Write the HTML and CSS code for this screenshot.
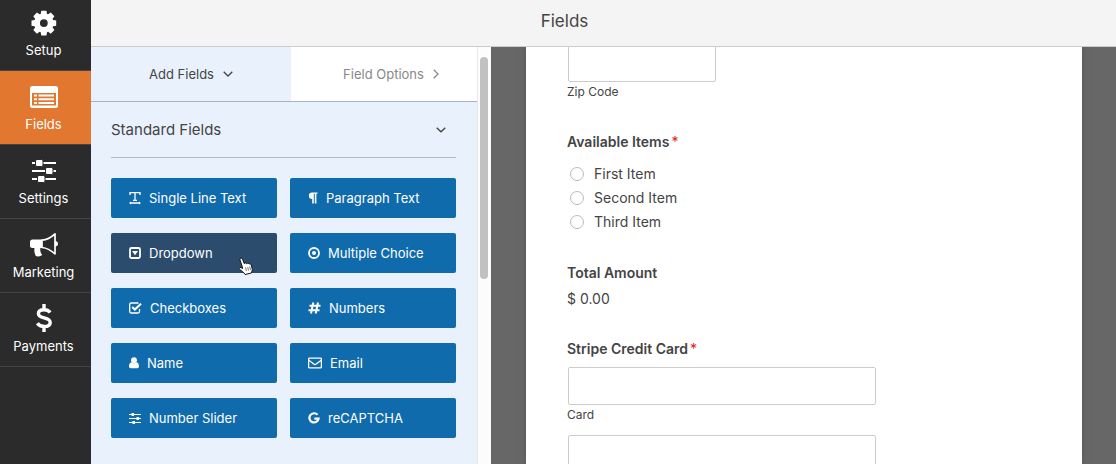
FILE: index.html
```html
<!DOCTYPE html>
<html lang="en">
<head>
<meta charset="utf-8">
<title>Fields</title>
<link rel="stylesheet" href="styles.css">
</head>
<body>
<div class="builder">
  <nav class="sidebar" aria-label="Builder sections">
    <button class="nav-item" type="button">
      <svg width="26" height="26" viewBox="0 0 26 26" fill="#fff"><path fill-rule="evenodd" d="M10.300 1h5.400l.6 3.300 1.200.5 2.800-1.900 3.800 3.800-1.900 2.800.5 1.200 3.300.6v5.400l-3.300.6-.5 1.200 1.900 2.800-3.800 3.800-2.800-1.900-1.200.5-.6 3.300h-5.400l-.6-3.300-1.200-.5-2.800 1.900-3.800-3.800 1.900-2.800-.5-1.200L0 16.700v-5.400l3.300-.6.5-1.200-1.900-2.800 3.800-3.800 2.800 1.900 1.200-.5zM13 9.900a4.100 4.100 0 1 0 0 8.200 4.100 4.100 0 0 0 0-8.200z" transform="translate(.5 -.2) scale(.95)"/></svg>
      <span>Setup</span>
    </button>
    <button class="nav-item nav-item-active" type="button">
      <svg width="30" height="26" viewBox="0 0 30 26"><rect x="1" y="2" width="28" height="22" rx="2.500" fill="#fff"/><path d="M3 9h24v12.500H3z" fill="#e27730"/><path d="M5 11.500h3M5 15.300h3M5 19.100h3M9.500 11.500H25M9.500 15.300H25M9.500 19.100H25" stroke="#fff" stroke-width="2"/></svg>
      <span>Fields</span>
    </button>
    <button class="nav-item" type="button">
      <svg width="26" height="26" viewBox="0 0 26 26"><path d="M1 5h24M1 13h24M1 21h24" stroke="#fff" stroke-width="2"/><g fill="#fff" stroke="#2b2b2b" stroke-width="1"><rect x="4.500" y="1.500" width="7.500" height="7" rx="1.500"/><rect x="14.500" y="9.500" width="7.500" height="7" rx="1.500"/><rect x="6.500" y="17.500" width="7.500" height="7" rx="1.500"/></g></svg>
      <span>Settings</span>
    </button>
    <button class="nav-item" type="button">
      <svg width="30" height="26" viewBox="0 0 30 26"><path d="M3.500 7.500H13V16h-1.500c-.8 1.500.2 2.800 0 4 .3 1.200 1 2.100 1.700 2.800-1.700 2.200-5.200 2-6.700.7-.8-2.500-1.600-4.700-1-7.500h-2A2.500 2.500 0 0 1 1 13.500V10a2.500 2.500 0 0 1 2.500-2.500z" fill="#fff"/><path d="M13 8.200C17.500 7.800 22 5.500 26 1.800v20c-4-3.500-8.500-5.900-13-6.300z" fill="none" stroke="#fff" stroke-width="1.700" stroke-linejoin="round"/><path d="M26 9c4 0 4 5.500 0 5.500z" fill="#fff"/></svg>
      <span>Marketing</span>
    </button>
    <button class="nav-item" type="button">
      <svg width="20" height="28" viewBox="0 0 20 28"><path d="M16.200 8.500C14.800 6.700 12.600 5.700 10 5.700c-3.300 0-5.600 1.500-5.600 4 0 5.400 11.800 2.900 11.800 8.700 0 2.600-2.500 4.100-6 4.100-3 0-5.500-1.200-6.900-3.200M10 0v5.500M10 22.500V28" fill="none" stroke="#fff" stroke-width="3.400"/></svg>
      <span>Payments</span>
    </button>
  </nav>

  <div class="workspace">
    <header class="topbar"><h1>Fields</h1></header>
    <div class="columns">
      <aside class="panel">
        <div class="tabs">
          <button class="tab tab-active" type="button">Add Fields <svg width="10" height="6" viewBox="0 0 10 6"><path d="M.7.700L5 5 9.300.700" class="line"/></svg></button>
          <button class="tab" type="button">Field Options <svg width="6" height="10" viewBox="0 0 6 10"><path d="M.7.700L5 5 .7 9.300" class="line"/></svg></button>
        </div>
        <section class="group">
          <button class="group-title" type="button">Standard Fields <svg width="10" height="6" viewBox="0 0 10 6"><path d="M.700.700L5 4.800 9.300.700" class="line"/></svg></button>
          <div class="field-grid">
            <button class="field" type="button"><svg width="12" height="14" viewBox="0 0 12 14"><path d="M1 4V1.700h10V4M6 1.700v7.600M4 9.300h4M1 12h10" class="line"/><path d="M0 12l2-1.500v3zM12 12l-2-1.500v3z" fill="#fff"/></svg>Single Line Text</button>
            <button class="field" type="button"><svg width="10" height="14" viewBox="0 0 10 14"><path d="M9.500 1.500H4.200a3.300 3.300 0 0 0 0 6.600V12.500h1.600V2.700h1v9.800h1.600V2.700h1.100z" fill="#fff"/></svg>Paragraph Text</button>
            <button class="field field-hover" type="button"><svg width="12" height="14" viewBox="0 0 12 14"><rect x="1" y="2" width="10" height="10" rx="1.500" fill="none" stroke="#fff" stroke-width="1.800"/><path d="M3 5h6L6 9.200z" fill="#fff"/></svg>Dropdown
              <svg class="pointer" width="16" height="18" viewBox="0 0 16 18"><path d="M4.200 9.500L2.100 3.200C1.500 1.200 3.700.3 4.500 2.200l1.800 4.400c.5-1 1.900-.9 2.400.1.600-.8 1.900-.6 2.300.4.800-.6 2-.2 2.200.9l1 3.700c.3 1.500-.4 2.700-.8 4.300l-6.300 1.500c-1.300-2.300-3.500-3.700-5.500-5.100C.4 11.300 1.500 9.800 3 10.600l1.600 1z" fill="#fff" stroke="#111" stroke-width="1"/><path d="M7.600 10.500l.8 3.500M9.700 10l.8 3.500M11.700 9.500l.8 3.500" stroke="#555" stroke-width=".8"/></svg>
            </button>
            <button class="field" type="button"><svg width="12" height="14" viewBox="0 0 12 14"><circle cx="6" cy="7" r="5" fill="none" stroke="#fff" stroke-width="1.800"/><circle cx="6" cy="7" r="2" fill="#fff"/></svg>Multiple Choice</button>
            <button class="field" type="button"><svg width="13" height="14" viewBox="0 0 13 14"><path d="M10.500 8v2.500a1.500 1.500 0 0 1-1.500 1.500H2.200A1.500 1.500 0 0 1 .7 10.500v-7A1.500 1.500 0 0 1 2.200 2H9.500" class="line"/><path d="M3.300 6l2.500 2.500L12 2.700" fill="none" stroke="#fff" stroke-width="2"/></svg>Checkboxes</button>
            <button class="field" type="button"><svg width="13" height="14" viewBox="0 0 13 14"><path d="M5.300 1.500L3 12.500M10 1.500L7.700 12.500M1.500 4.800H12.500M.5 9.200H11.500" fill="none" stroke="#fff" stroke-width="2"/></svg>Numbers</button>
            <button class="field" type="button"><svg width="10" height="14" viewBox="0 0 10 14" fill="#fff"><circle cx="5" cy="4.200" r="2.900"/><path d="M2.400 6.200C3.800 7.600 6.200 7.600 7.600 6.200 9.300 6.700 10 8.300 10 10.300 10 11.600 9.200 12.300 8.200 12.300H1.800C.8 12.300 0 11.600 0 10.300 0 8.300.7 6.700 2.400 6.200z"/></svg>Name</button>
            <button class="field" type="button"><svg width="14" height="14" viewBox="0 0 14 14"><rect x=".6" y="2.100" width="12.800" height="9.800" rx="1" class="line"/><path d="M.8 4.200L5.800 8.100C6.600 8.700 7.400 8.700 8.200 8.100L13.200 4.200" class="line"/></svg>Email</button>
            <button class="field" type="button"><svg width="12" height="14" viewBox="0 0 12 14"><path d="M0 3.500h12M0 7.500h12M0 11.500h12" stroke="#fff" stroke-width="1"/><path d="M2.500 2h2.500v3h-2.500zM7.500 6h2.500v3h-2.500zM3.500 10h2.500v3h-2.500z" fill="#fff"/></svg>Number Slider</button>
            <button class="field" type="button"><svg width="12" height="14" viewBox="0 0 12 14"><path d="M9.500 3.800A4.600 4.600 0 1 0 10.600 7.600H6.300" fill="none" stroke="#fff" stroke-width="2.200"/></svg>reCAPTCHA</button>
          </div>
        </section>
        <div class="scrollbar"><div class="thumb"></div></div>
      </aside>

      <main class="preview">
        <form class="paper">
          <div class="form-field zip">
            <input class="box box-short" id="zip" type="text">
            <label class="sublabel" for="zip">Zip Code</label>
          </div>
          <fieldset class="form-field choices">
            <legend class="label">Available Items<span class="required">*</span></legend>
            <div class="options">
              <label class="option"><input type="radio" name="item">First Item</label>
              <label class="option"><input type="radio" name="item">Second Item</label>
              <label class="option"><input type="radio" name="item">Third Item</label>
            </div>
          </fieldset>
          <div class="form-field">
            <div class="label">Total Amount</div>
            <div class="amount">$ 0.00</div>
          </div>
          <div class="form-field">
            <div class="label">Stripe Credit Card<span class="required">*</span></div>
            <div class="card">
              <input class="box" id="card" type="text">
              <label class="sublabel" for="card">Card</label>
              <input class="box box-next" type="text" aria-label="Name on Card">
            </div>
          </div>
        </form>
      </main>
    </div>
  </div>
</div>
</body>
</html>
```
FILE: styles.css
```css
* { box-sizing: border-box; }
body { margin: 0; font-family: Inter, "Liberation Sans", sans-serif; font-size: 13px; color: #444; }
button { margin: 0; padding: 0; border: 0; background: none; font: inherit; color: inherit; cursor: pointer; }
svg { flex: none; }
.line { fill: none; stroke: currentColor; stroke-width: 1.300; }

.builder { display: flex; height: 100vh; overflow: hidden; }

.sidebar { flex: none; width: 91px; background: #2b2b2b; color: #fff; }
.nav-item { display: flex; flex-direction: column; align-items: center; justify-content: flex-end; gap: 4px; width: 100%; height: 74px; padding: 0 4px 10px 0; border-bottom: 1px solid #444; line-height: 20px; }
.nav-item:first-child { height: 71px; }
.nav-item-active { background: #e27730; }

.workspace { flex: 1; min-width: 0; display: flex; flex-direction: column; }
.topbar { flex: none; height: 47px; padding: 0 78px 5px 0; background: #f4f4f4; border-bottom: 1px solid #ccc; display: flex; align-items: center; justify-content: center; }
.topbar h1 { margin: 0; font-size: 17px; font-weight: 400; line-height: 24px; }

.columns { flex: 1; min-height: 0; display: flex; }
.panel { position: relative; flex: none; width: 400px; background: #e9f2fc; }
.tabs { display: flex; border-bottom: 1px solid #a9b4c3; }
.tab { flex: 1; display: flex; align-items: center; justify-content: center; gap: 9px; height: 54px; background: #fff; color: #888; }
.tab-active { background: #e9f2fc; color: #444; }

.group { padding: 0 35px 0 20px; }
.group-title { display: flex; align-items: center; justify-content: space-between; width: 100%; height: 56px; padding-right: 10px; border-bottom: 1px solid #b0bac8; font-size: 15px; }
.field-grid { display: grid; grid-template-columns: 1fr 1fr; gap: 15px 13px; padding-top: 20px; }
.field { position: relative; display: flex; align-items: center; gap: 8px; height: 40px; padding-left: 18px; border-radius: 2px; background: #106bad; color: #fff; white-space: nowrap; }
.field-hover { background: #2b4c6d; }
.pointer { position: absolute; right: 23px; bottom: -2px; }

.scrollbar { position: absolute; top: 0; right: 0; bottom: 0; width: 14px; padding: 10px 2px 0; background: #fcfcfc; border-left: 1px solid #e8e8e8; }
.thumb { width: 8px; height: 222px; border-radius: 4px; background: #c1c1c1; }

.preview { flex: 1; min-width: 0; padding: 0 34px 0 35px; background: #676767; overflow: hidden; }
.paper { height: 100%; padding-left: 41px; background: #fff; overflow: hidden; box-shadow: 0 0 6px #555; font-size: 14px; }
.form-field { margin: 0 0 30px; padding: 0; border: 0; }
.zip { margin-top: -3px; }
.choices { margin-bottom: 29px; }
.box { display: block; width: 308px; height: 38px; margin-left: 1px; padding: 0 10px; border: 1px solid #ccc; border-radius: 2px; background: #fff; font: inherit; color: inherit; }
.box-short { width: 148px; }
.box-next { margin-top: 10px; }
.sublabel { display: block; font-size: 12px; line-height: 20px; }
.label { padding: 0; font-weight: 600; line-height: 20px; }
.required { margin-left: 2px; color: #e02020; font-weight: 400; }
.options { padding-top: 10px; }
.option { display: flex; align-items: center; gap: 10px; padding-left: 3px; line-height: 24px; }
.option input { appearance: none; width: 14px; height: 14px; margin: 0; border: 1px solid #bbb; border-radius: 50%; background: #fff; }
.amount { padding-top: 6px; line-height: 20px; }
.card { padding-top: 8px; }
```
